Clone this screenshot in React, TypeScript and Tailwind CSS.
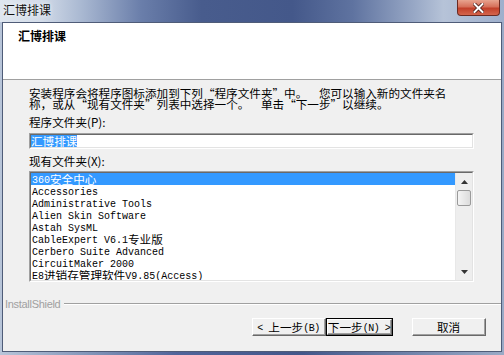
import React from "react";

const items = [
  "360安全中心",
  "Accessories",
  "Administrative Tools",
  "Alien Skin Software",
  "Astah SysML",
  "CableExpert V6.1专业版",
  "Cerbero Suite Advanced",
  "CircuitMaker 2000",
  "E8进销存管理软件V9.85(Access)",
];

function Mixed({ text }: { text: string }) {
  const parts = text.match(/[\x00-\x7f]+|[^\x00-\x7f]+/g) || [];
  return (
    <>
      {parts.map((p, i) =>
        /^[\x00-\x7f]/.test(p) ? (
          <span key={i} className="inline-block h-[12px] align-top font-['Liberation_Mono',monospace] text-[10px] leading-[15px]">
            {p}
          </span>
        ) : (
          <span key={i} className="inline-block h-[12px] align-top font-['Noto_Sans_CJK_SC',sans-serif] text-[11.6px] leading-[12px]">
            {p}
          </span>
        )
      )}
    </>
  );
}

function BtnText({ text }: { text: string }) {
  const parts = text.match(/[\x00-\x7f]+|[^\x00-\x7f]+/g) || [];
  return (
    <span className="whitespace-pre leading-[12px]">
      {parts.map((p, i) =>
        /^[\x00-\x7f]/.test(p) ? (
          <span key={i} className="inline-block h-[12px] align-top font-['Liberation_Mono',monospace] text-[10px] leading-[15px] tracking-[-0.5px]">
            {p}
          </span>
        ) : (
          <span key={i} className="inline-block h-[12px] align-top font-['Noto_Sans_CJK_SC',sans-serif] text-[11.6px] leading-[12px]">
            {p}
          </span>
        )
      )}
    </span>
  );
}

function Para({ text }: { text: string }) {
  const parts = text.split(/(“|”|  )/);
  return (
    <div className="h-[11px] whitespace-pre">
      {parts.map((p, i) => {
        if (p === "“")
          return (
            <span key={i} className="inline-block w-[11.6px] text-right">
              “
            </span>
          );
        if (p === "”")
          return (
            <span key={i} className="inline-block w-[11.6px] text-left">
              ”
            </span>
          );
        if (p === "  ") return <span key={i} className="inline-block w-[11.6px]" />;
        return <span key={i}>{p}</span>;
      })}
    </div>
  );
}

function Sunken({ className, children }: { className: string; children: React.ReactNode }) {
  return (
    <div className={`border-t border-l border-t-[#a0a0a0] border-l-[#a0a0a0] border-b border-r border-b-white border-r-white ${className}`}>
      <div className="h-full w-full border-t border-l border-t-[#696969] border-l-[#696969] border-b border-r border-b-[#e3e3e3] border-r-[#e3e3e3] bg-white">
        {children}
      </div>
    </div>
  );
}

function Btn({ label, def, className }: { label: string; def?: boolean; className: string }) {
  const inner = (
    <div className="h-full w-full border-t border-l border-t-white border-l-white border-b border-r border-b-[#696969] border-r-[#696969]">
      <div className="flex h-full w-full items-center justify-center overflow-visible whitespace-nowrap border-b border-r border-b-[#a0a0a0] border-r-[#a0a0a0] text-black">
        <BtnText text={label} />
      </div>
    </div>
  );
  return def ? (
    <div className={`border border-black ${className}`}>{inner}</div>
  ) : (
    <div className={className}>{inner}</div>
  );
}

export default function App() {
  return (
    <div
      lang="zh-CN"
      className="flex h-[355px] w-[504px] flex-col overflow-hidden bg-[linear-gradient(to_right,#b8c5d9_0%,#8194b8_18%,#50649a_35%,#43578a_60%,#6d80a8_80%,#9aaac6_100%)] font-['Noto_Sans_CJK_SC','Liberation_Sans',sans-serif] text-black"
    >
      {/* Title bar */}
      <div className="relative h-[22px] shrink-0 bg-[linear-gradient(to_right,#dfe6ef_0%,#d3dce9_8%,#aab9d2_16%,#6a7eaa_28%,#485c8d_40%,#44588a_58%,#5f73a0_70%,#97a7c5_82%,#b6c3d8_88%,#9eafcc_100%)]">
        <div className="pl-[3px] pt-[3px] text-[12px] leading-[14px] text-[#111] [text-shadow:0_0_4px_#ffffff]">
          汇博排课
        </div>
        <div className="absolute right-[4px] top-0 flex h-[16px] w-[43px] items-center justify-center rounded-b-[4px] border border-t-0 border-[#6b2a22] bg-[linear-gradient(to_bottom,#e8a48f_0%,#d6705a_45%,#c2402a_55%,#d4654d_100%)]">
          <svg width="11" height="10" viewBox="0 0 11 10">
            <path d="M1.5 1 L9.5 9 M9.5 1 L1.5 9" stroke="#4a1c16" strokeWidth="3.6" strokeLinecap="square" />
            <path d="M1.5 1 L9.5 9 M9.5 1 L1.5 9" stroke="#ffffff" strokeWidth="2" strokeLinecap="square" />
          </svg>
        </div>
      </div>

      {/* Client */}
      <div className="mx-[2px] flex h-[330px] shrink-0 flex-col border border-[#4f5c78] bg-[#f0f0f0]">
        {/* Header */}
        <div className="h-[57px] shrink-0 border-b border-b-[#a0a0a0] bg-white pl-[15px] pt-[6px]">
          <div className="text-[12px] font-bold leading-[14px]">汇博排课</div>
        </div>

        {/* Body */}
        <div className="flex flex-col pl-[26px]">
          <div className="mt-[8px] text-[11.6px] leading-[11px]">
            <Para text="安装程序会将程序图标添加到下列“程序文件夹”中。  您可以输入新的文件夹名" />
            <Para text="称，或从“现有文件夹”列表中选择一个。  单击“下一步”以继续。" />
          </div>
          <div className="mt-[6px] text-[11.6px] leading-[12px]">程序文件夹(P):</div>
          <Sunken className="mt-[5px] h-[16px] w-[445px]">
            <div className="flex h-full items-center">
              <span className="bg-[#3399ff] text-[11.6px] leading-[12px] text-white">汇博排课</span>
            </div>
          </Sunken>
          <div className="mt-[6px] text-[11.6px] leading-[12px]">现有文件夹(X):</div>
          <Sunken className="mt-[4px] h-[111px] w-[445px]">
            <div className="flex h-full w-full overflow-hidden">
              <div className="flex flex-1 flex-col">
                {items.map((it, i) => (
                  <div
                    key={it}
                    className={
                      i === 0
                        ? "h-[12px] shrink-0 whitespace-pre bg-[#3399ff] pl-[1px] leading-[12px] text-white"
                        : "h-[12px] shrink-0 whitespace-pre pl-[1px] leading-[12px] text-black"
                    }
                  >
                    <Mixed text={it} />
                  </div>
                ))}
              </div>
              <div className="flex w-[17px] shrink-0 flex-col border-l border-l-[#e8e8e8] bg-[#eeeeee]">
                <div className="flex h-[17px] items-center justify-center">
                  <svg width="7" height="4" viewBox="0 0 7 4">
                    <path d="M3.5 0 L7 4 L0 4 Z" fill="#333" />
                  </svg>
                </div>
                <div className="mx-[1px] h-[16px] rounded-[2px] border border-[#9a9a9a] bg-[linear-gradient(to_right,#f4f4f4,#dcdcdc)]" />
                <div className="flex-1" />
                <div className="flex h-[17px] items-center justify-center">
                  <svg width="7" height="4" viewBox="0 0 7 4">
                    <path d="M0 0 L7 0 L3.5 4 Z" fill="#333" />
                  </svg>
                </div>
              </div>
            </div>
          </Sunken>
        </div>

        {/* InstallShield */}
        <div className="mt-[16px] flex h-[12px] items-center pl-[2px]">
          <span className="font-['Liberation_Sans',sans-serif] text-[11px] leading-[12px] tracking-[-0.3px] text-[#a0a0a0]">
            InstallShield
          </span>
          <div className="ml-[4px] flex-1 border-t border-t-[#a0a0a0] border-b border-b-white" />
        </div>

        {/* Buttons */}
        <div className="mt-[8px] flex justify-end pr-[15px]">
          <Btn label="< 上一步(B)" className="h-[18px] w-[74px]" />
          <Btn label="下一步(N) >" def className="h-[18px] w-[67px]" />
          <Btn label="取消" className="ml-[19px] h-[18px] w-[74px]" />
        </div>
      </div>
    </div>
  );
}
